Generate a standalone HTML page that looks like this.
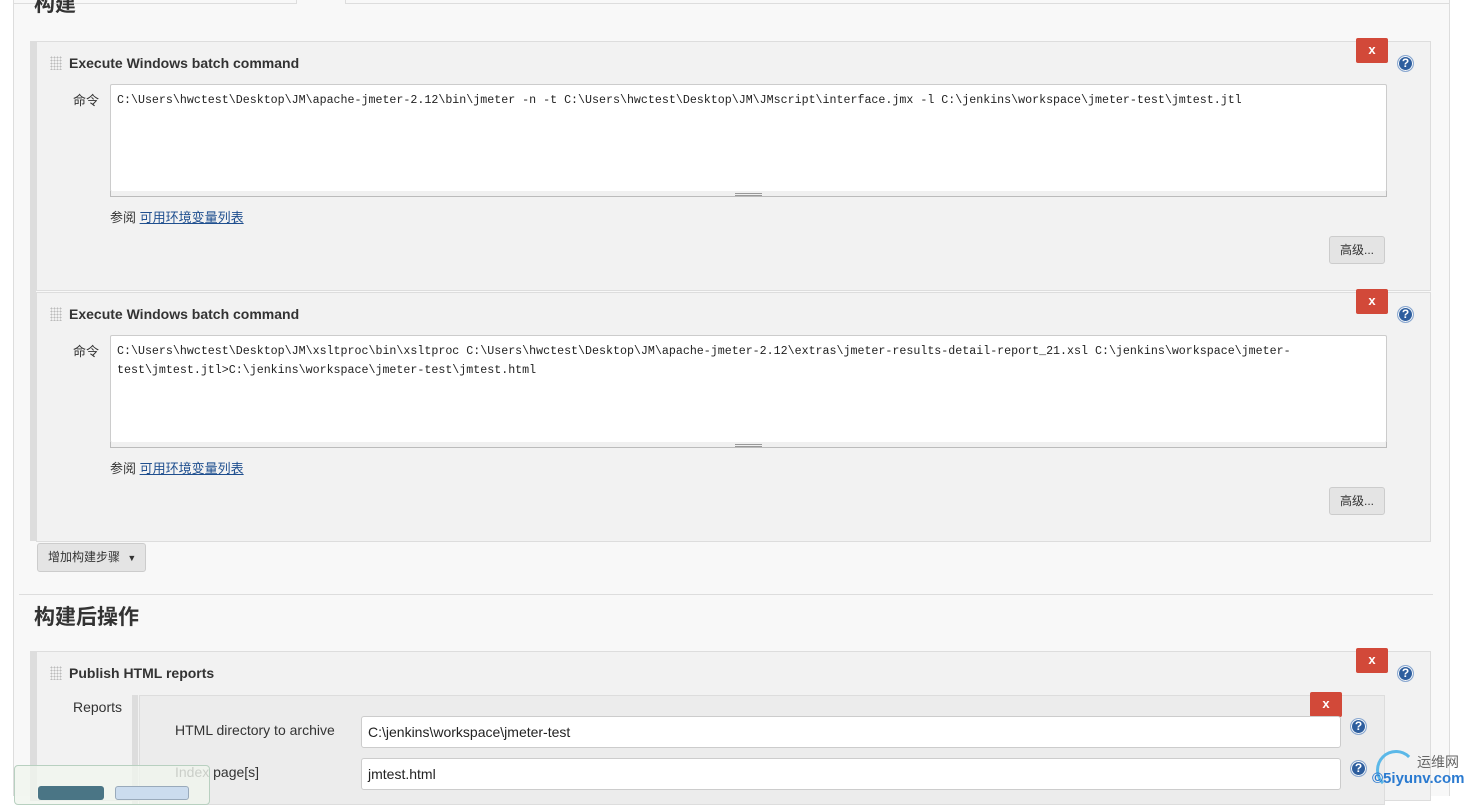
<!DOCTYPE html>
<html><head><meta charset="utf-8"><style>
*{margin:0;padding:0;box-sizing:border-box}
body{width:1479px;height:796px;overflow:hidden;background:#fff;font-family:"Liberation Sans","Noto Sans CJK SC",sans-serif;color:#333;position:relative}
.a{position:absolute}
.outer{left:13px;top:0;width:1437px;height:796px;background:#f8f8f8;border-left:1px solid #ddd;border-right:1px solid #ddd}
.bar{background:#ddd;width:6px}
.blk{background:#f2f2f2;border:1px solid #ddd}
.grip{width:12px;height:14px;background-image:radial-gradient(#bbb 0.8px,transparent 0.9px);background-size:3px 3px}
.title{font-weight:bold;font-size:14px;color:#333}
.x{width:32px;height:25px;background:#d24939;border-radius:2px;color:#fff;font-weight:bold;font-size:13px;text-align:center;line-height:24px}
.q{width:17px;height:17px;border-radius:50%;background:#2e5e9e;border:1px solid #8aa8d0;color:#fff;font-size:12px;font-weight:bold;text-align:center;line-height:15px;box-shadow:inset 0 0 0 1px #fff}
.ta{background:#fff;border:1px solid #ccc;border-radius:2px;font-family:"Liberation Mono",monospace;font-size:11.65px;color:#222;padding:6px 6px;line-height:19px;white-space:pre}
.rs{height:6px;border:1px solid #bbb;border-top:none;background:#f0f0f0}
.lab{font-size:13px;color:#333}
.lnk{color:#1f4f8f;text-decoration:underline}
.btn{background:#e4e4e4;border:1px solid #ccc;border-radius:3px;font-size:12px;color:#333;text-align:center}
.inp{background:#fff;border:1px solid #ccc;border-radius:3px;font-size:14px;color:#222;padding-left:6px}
</style></head><body>
<div class="a outer"></div>
<div class="a" style="left:13px;top:3px;width:284px;height:1px;background:#ddd"></div>
<div class="a" style="left:296px;top:0;width:1px;height:4px;background:#ddd"></div>
<div class="a" style="left:345px;top:0;width:1px;height:4px;background:#ddd"></div>
<div class="a" style="left:345px;top:3px;width:1104px;height:1px;background:#ddd"></div>
<div class="a" style="left:34px;top:-12px;font-size:21px;font-weight:bold;color:#333">构建</div>

<div class="a bar" style="left:30px;top:41px;height:500px"></div>
<div class="a blk" style="left:36px;top:41px;width:1395px;height:250px"></div>
<div class="a grip" style="left:50px;top:56px"></div>
<div class="a title" style="left:69px;top:55px">Execute Windows batch command</div>
<div class="a x" style="left:1356px;top:38px">x</div>
<div class="a q" style="left:1397px;top:55px">?</div>
<div class="a lab" style="left:73px;top:90px">命令</div>
<div class="a ta" style="left:110px;top:84px;width:1277px;height:108px">C:\Users\hwctest\Desktop\JM\apache-jmeter-2.12\bin\jmeter -n -t C:\Users\hwctest\Desktop\JM\JMscript\interface.jmx -l C:\jenkins\workspace\jmeter-test\jmtest.jtl</div>
<div class="a rs" style="left:110px;top:191px;width:1277px"></div>
<div class="a" style="left:735px;top:193px;width:27px;height:3px;border-top:1px solid #999;border-bottom:1px solid #999"></div>
<div class="a lab" style="left:110px;top:207px">参阅 <span class="lnk">可用环境变量列表</span></div>
<div class="a btn" style="left:1329px;top:236px;width:56px;height:28px;line-height:26px">高级...</div>

<div class="a blk" style="left:36px;top:292px;width:1395px;height:250px"></div>
<div class="a grip" style="left:50px;top:307px"></div>
<div class="a title" style="left:69px;top:306px">Execute Windows batch command</div>
<div class="a x" style="left:1356px;top:289px">x</div>
<div class="a q" style="left:1397px;top:306px">?</div>
<div class="a lab" style="left:73px;top:341px">命令</div>
<div class="a ta" style="left:110px;top:335px;width:1277px;height:108px">C:\Users\hwctest\Desktop\JM\xsltproc\bin\xsltproc C:\Users\hwctest\Desktop\JM\apache-jmeter-2.12\extras\jmeter-results-detail-report_21.xsl C:\jenkins\workspace\jmeter-
test\jmtest.jtl&gt;C:\jenkins\workspace\jmeter-test\jmtest.html</div>
<div class="a rs" style="left:110px;top:442px;width:1277px"></div>
<div class="a" style="left:735px;top:444px;width:27px;height:3px;border-top:1px solid #999;border-bottom:1px solid #999"></div>
<div class="a lab" style="left:110px;top:458px">参阅 <span class="lnk">可用环境变量列表</span></div>
<div class="a btn" style="left:1329px;top:487px;width:56px;height:28px;line-height:26px">高级...</div>

<div class="a btn" style="left:37px;top:543px;width:109px;height:29px;line-height:27px;text-align:left;padding-left:10px">增加构建步骤 <span style="font-size:9px;margin-left:4px">▼</span></div>

<div class="a" style="left:19px;top:594px;width:1414px;height:1px;background:#ddd"></div>
<div class="a" style="left:34px;top:601px;font-size:21px;font-weight:bold;color:#333">构建后操作</div>

<div class="a bar" style="left:30px;top:651px;height:150px"></div>
<div class="a blk" style="left:36px;top:651px;width:1395px;height:150px"></div>
<div class="a grip" style="left:50px;top:666px"></div>
<div class="a title" style="left:69px;top:665px">Publish HTML reports</div>
<div class="a x" style="left:1356px;top:648px">x</div>
<div class="a q" style="left:1397px;top:665px">?</div>
<div class="a" style="left:73px;top:699px;font-size:14px;color:#333">Reports</div>
<div class="a bar" style="left:132px;top:695px;height:110px"></div>
<div class="a" style="left:139px;top:695px;width:1246px;height:110px;background:#ececec;border:1px solid #ddd"></div>
<div class="a x" style="left:1310px;top:692px">x</div>
<div class="a" style="left:175px;top:722px;font-size:14px;color:#333">HTML directory to archive</div>
<div class="a inp" style="left:361px;top:716px;width:980px;height:32px;line-height:31px">C:\jenkins\workspace\jmeter-test</div>
<div class="a q" style="left:1350px;top:718px">?</div>
<div class="a" style="left:175px;top:764px;font-size:14px;color:#333">Index page[s]</div>
<div class="a inp" style="left:361px;top:758px;width:980px;height:32px;line-height:31px">jmtest.html</div>
<div class="a q" style="left:1350px;top:760px">?</div>

<div class="a" style="left:14px;top:765px;width:196px;height:40px;background:rgba(240,245,238,0.8);border:1px solid #b8d0c0;border-radius:4px"></div>
<div class="a" style="left:38px;top:786px;width:66px;height:14px;background:#4a7585;border-radius:3px"></div>
<div class="a" style="left:115px;top:786px;width:74px;height:14px;background:#cbdcee;border:1px solid #9ab;border-radius:3px"></div>

<div class="a" style="left:1376px;top:750px;width:40px;height:40px;border-radius:50%;border:3px solid #5bb8e8;border-right-color:transparent;border-bottom-color:transparent"></div>
<div class="a" style="left:1417px;top:752px;font-size:14px;color:#666">运维网</div>
<div class="a" style="left:1372px;top:770px;font-size:15px;color:#2a7ad0;font-weight:bold">©5<span style="color:#2a7ad0">iyunv.com</span></div>
</body></html>
